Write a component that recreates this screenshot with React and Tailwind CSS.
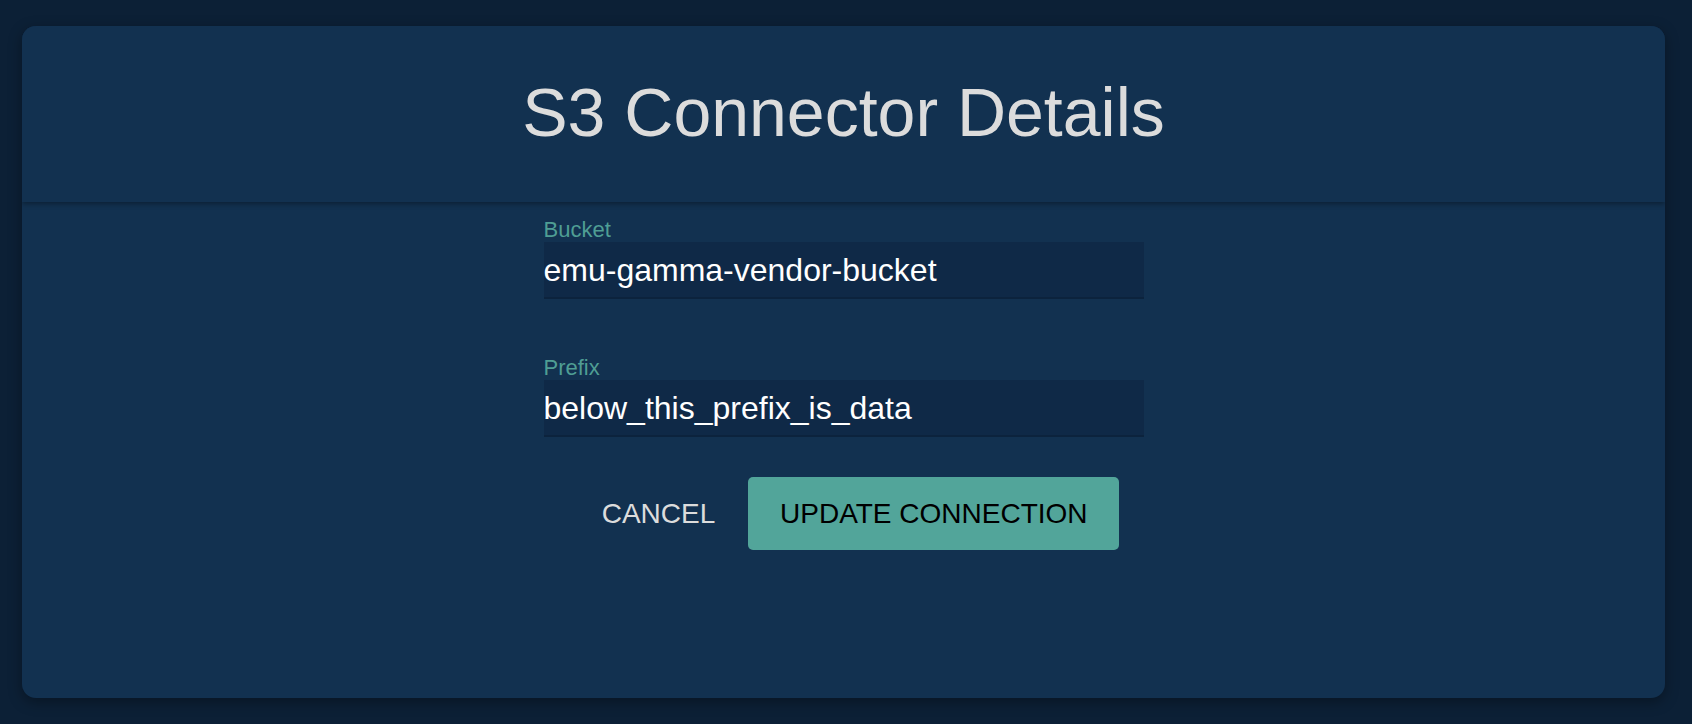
import React from 'react'

// ── Read-only field: small teal label over a dark filled box ────────────────
const Field = ({ label, value, className = '' }) => (
  <div className={`w-[600px] ${className}`}>
    <p className="text-[22px] leading-[25px] text-[#4f9e94]">{label}</p>
    <div className="h-[57px] bg-[#0f2947] border-b-2 border-[#0c233d] pt-[10px]">
      <span className="block text-[32px] leading-[36px] text-white whitespace-nowrap">{value}</span>
    </div>
  </div>
)

export default function App() {
  return (
    <div className="h-[724px] bg-[#0c2036] pl-[22px] pr-[27px] py-[26px] font-['Liberation_Sans',Arial,sans-serif]">
      <div className="h-[672px] rounded-[14px] bg-[#123150] shadow-[0_4px_14px_rgba(0,0,0,0.35)] overflow-hidden flex flex-col">
        {/* ── Header ── */}
        <header className="relative z-10 h-[176px] shrink-0 flex items-center justify-center pb-[4px] bg-[#123150] shadow-[0_2px_5px_rgba(0,0,0,0.35)]">
          <h1 className="text-[68px] leading-none font-normal text-[#dcdcdc]">S3 Connector Details</h1>
        </header>

        {/* ── Form ── */}
        <div className="flex flex-col items-center pt-[15px]">
          <Field label="Bucket" value="emu-gamma-vendor-bucket" />
          <Field label="Prefix" value="below_this_prefix_is_data" className="mt-[56px]" />

          <div className="mt-[40px] flex items-center pl-[18px]">
            <button className="h-[73px] px-[16px] text-[28px] text-[#dcdcdc] uppercase">
              Cancel
            </button>
            <button className="ml-[17px] w-[371px] h-[73px] rounded-[5px] bg-[#52a59a] text-[28px] text-black uppercase flex items-center justify-center">
              Update Connection
            </button>
          </div>
        </div>
      </div>
    </div>
  )
}
